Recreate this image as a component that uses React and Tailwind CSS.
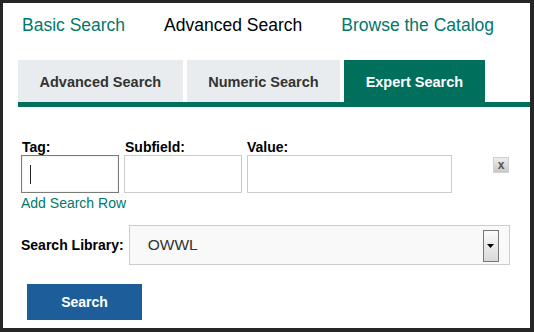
import React from "react";

export default function App() {
  const font = { fontFamily: '"Liberation Sans", Arial, sans-serif' };
  return (
    <div
      className="w-[534px] h-[332px] bg-[#262626] pt-[3px] pl-[3px] pr-[4px] pb-[4px]"
      style={font}
    >
      <div className="w-full h-full bg-white flex flex-col">
        {/* top nav */}
        <div className="flex pl-[19px] pt-[10px] gap-[39px] text-[17.5px] leading-[24px]">
          <span className="text-[#00786a]">Basic Search</span>
          <span className="text-black">Advanced Search</span>
          <span className="text-[#00786a]">Browse the Catalog</span>
        </div>

        {/* tabs */}
        <div className="ml-[15px] mt-[23px] flex gap-[4px] border-b-[5px] border-[#006f5c]">
          <div className="h-[42px] px-[21.5px] pt-[4px] flex items-center bg-[#e9ecef] text-[#333] font-bold text-[14.5px]">
            Advanced Search
          </div>
          <div className="h-[42px] px-[21.5px] pt-[4px] flex items-center bg-[#e9ecef] text-[#333] font-bold text-[14.5px]">
            Numeric Search
          </div>
          <div className="h-[42px] px-[21.5px] pt-[4px] flex items-center bg-[#006f5c] text-white font-bold text-[14.5px]">
            Expert Search
          </div>
        </div>

        {/* form */}
        <div className="pl-[18px] mt-[32px] flex flex-col">
          <div className="flex items-start">
            <div className="flex flex-col">
              <div className="pl-[1px] h-[16px] leading-[16px] text-[14px] font-bold text-black">Tag:</div>
              <div className="w-[98px] h-[38px] border border-[#7a7a7a] bg-white flex items-center shadow-[inset_0_0_2px_rgba(0,0,0,0.15)]">
                <div className="ml-[8px] w-px h-[19px] bg-[#222]" />
              </div>
            </div>
            <div className="flex flex-col ml-[5px]">
              <div className="pl-[1px] h-[16px] leading-[16px] text-[14px] font-bold text-black">Subfield:</div>
              <div className="w-[118px] h-[38px] border border-[#cccccc] bg-white" />
            </div>
            <div className="flex flex-col ml-[5px]">
              <div className="h-[16px] leading-[16px] text-[14px] font-bold text-black">Value:</div>
              <div className="w-[205px] h-[38px] border border-[#cccccc] bg-white" />
            </div>
            <div className="ml-[41px] mt-[18px] w-[16px] h-[16px] border border-[#d0d0d0] bg-gradient-to-b from-[#eeeeee] to-[#c8c8c8] flex items-center justify-center text-[12px] leading-none font-bold text-[#555]">
              x
            </div>
          </div>

          <div className="mt-[2px] h-[16px] leading-[16px] text-[14px] text-[#00786a]">Add Search Row</div>

          <div className="mt-[14px] flex items-center">
            <span className="text-[14px] font-bold text-black">Search Library:</span>
            <div className="ml-[5px] w-[381px] h-[40px] border border-[#cccccc] bg-[#f9f9f9] flex items-center relative">
              <span className="pl-[18px] text-[15.5px] text-[#333]">OWWL</span>
              <div className="absolute right-[10px] top-[4px] w-[16px] h-[32px] border border-[#777] bg-gradient-to-b from-[#fbfbfb] to-[#d9d9d9] flex items-center justify-center">
                <svg width="7" height="4" viewBox="0 0 7 4">
                  <path d="M0 0 L7 0 L3.5 4 Z" fill="#000" />
                </svg>
              </div>
            </div>
          </div>

          <div className="ml-[6px] mt-[19px] w-[115px] h-[36px] bg-[#1d5e9a] flex items-center justify-center text-white font-bold text-[14px]">
            Search
          </div>
        </div>
      </div>
    </div>
  );
}
